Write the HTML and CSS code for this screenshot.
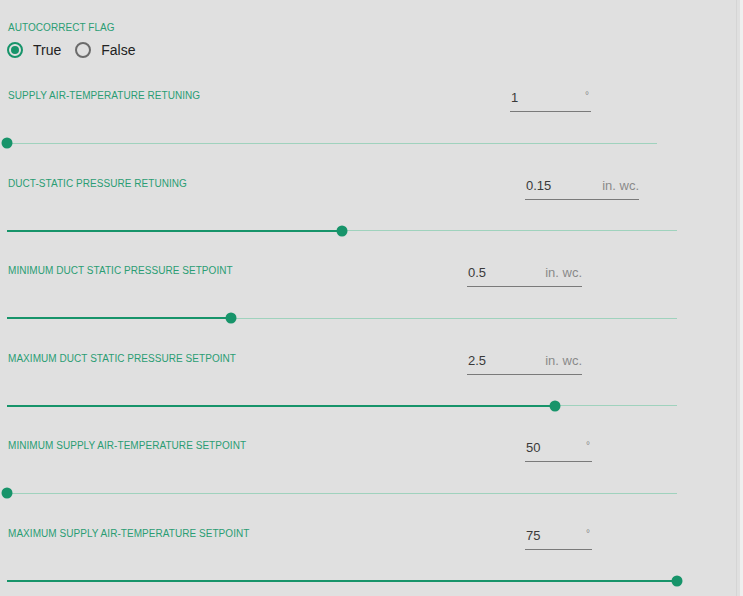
FILE: index.html
```html
<!DOCTYPE html>
<html lang="en">
<head>
<meta charset="utf-8">
<title>Settings</title>
<link rel="stylesheet" href="styles.css">
</head>
<body>
<div class="page">
  <div class="content">
    <div class="flag">
      <div class="label">Autocorrect flag</div>
      <div class="radios">
        <label class="radio checked"><span class="circle"></span><span class="rtext">True</span></label>
        <label class="radio"><span class="circle"></span><span class="rtext">False</span></label>
      </div>
    </div>

    <div class="field f1">
      <div class="head">
        <div class="label">Supply air-temperature retuning</div>
        <div class="input"><span class="value">1</span><span class="unit deg">°</span></div>
      </div>
      <div class="slider short"><div class="track"><div class="fill" style="width:0%"></div><div class="thumb" style="left:0%"></div></div></div>
    </div>

    <div class="field f2">
      <div class="head">
        <div class="label">Duct-static pressure retuning</div>
        <div class="input"><span class="value">0.15</span><span class="unit">in. wc.</span></div>
      </div>
      <div class="slider"><div class="track"><div class="fill" style="width:50%"></div><div class="thumb" style="left:50%"></div></div></div>
    </div>

    <div class="field f3">
      <div class="head">
        <div class="label">Minimum duct static pressure setpoint</div>
        <div class="input"><span class="value">0.5</span><span class="unit">in. wc.</span></div>
      </div>
      <div class="slider"><div class="track"><div class="fill" style="width:33.4%"></div><div class="thumb" style="left:33.4%"></div></div></div>
    </div>

    <div class="field f4">
      <div class="head">
        <div class="label">Maximum duct static pressure setpoint</div>
        <div class="input"><span class="value">2.5</span><span class="unit">in. wc.</span></div>
      </div>
      <div class="slider"><div class="track"><div class="fill" style="width:81.8%"></div><div class="thumb" style="left:81.8%"></div></div></div>
    </div>

    <div class="field f5">
      <div class="head">
        <div class="label">Minimum supply air-temperature setpoint</div>
        <div class="input"><span class="value">50</span><span class="unit deg">°</span></div>
      </div>
      <div class="slider"><div class="track"><div class="fill" style="width:0%"></div><div class="thumb" style="left:0%"></div></div></div>
    </div>

    <div class="field f6">
      <div class="head">
        <div class="label">Maximum supply air-temperature setpoint</div>
        <div class="input"><span class="value">75</span><span class="unit deg">°</span></div>
      </div>
      <div class="slider"><div class="track"><div class="fill" style="width:100%"></div><div class="thumb" style="left:100%"></div></div></div>
    </div>
  </div>
</div>
</body>
</html>
```

FILE: styles.css
```css
html {
  background: #efefef;
}
body {
  margin: 0;
  font-family: "Liberation Sans", Arial, sans-serif;
  color: #222;
}
.page {
  width: 740px;
  background: #e0e0e0;
  min-height: 596px;
}
.content {
  width: 728px;
  padding-left: 8px;
  min-height: 596px;
  border-right: 1px solid #d5d5d5;
  box-sizing: content-box;
}
.label {
  font-size: 10px;
  line-height: 12px;
  letter-spacing: 0.05px;
  text-transform: uppercase;
  color: #2a9d73;
  white-space: nowrap;
}
.flag {
  padding-top: 22px;
}
.radios {
  display: flex;
  margin-top: 8px;
  margin-left: -1px;
  height: 16px;
  align-items: center;
}
.radio {
  display: flex;
  align-items: center;
  margin-right: 14px;
}
.circle {
  width: 16px;
  height: 16px;
  box-sizing: border-box;
  border: 2px solid #6b6b6b;
  border-radius: 50%;
  position: relative;
}
.radio.checked .circle {
  border-color: #17946a;
}
.radio.checked .circle::after {
  content: "";
  position: absolute;
  left: 2px;
  top: 2px;
  width: 8px;
  height: 8px;
  border-radius: 50%;
  background: #17946a;
}
.rtext {
  font-size: 14px;
  line-height: 16px;
  margin-left: 10px;
  color: #222;
}
.field {
  height: 87.5px;
}
.flag + .field {
  margin-top: 31px;
}
.head {
  display: flex;
  align-items: flex-start;
  height: 23px;
}
.head .label {
  width: var(--label-w);
  flex: 0 0 auto;
  margin-top: 1px;
}
.input {
  display: flex;
  justify-content: space-between;
  align-items: flex-start;
  width: var(--input-w);
  height: 23px;
  box-sizing: border-box;
  border-bottom: 1px solid #7a7a7a;
}
.value {
  font-size: 13px;
  line-height: 18px;
  color: #3a3a3a;
  padding-left: 1px;
}
.unit {
  font-size: 13px;
  line-height: 18px;
  color: #8a8a8a;
}
.unit.deg {
  font-size: 10px;
  line-height: 14px;
  padding-right: 2px;
}
.f1 { --label-w: 502px; --input-w: 81px; }
.f2 { --label-w: 517px; --input-w: 114px; }
.f3 { --label-w: 459px; --input-w: 115px; }
.f4 { --label-w: 459px; --input-w: 115px; }
.f5 { --label-w: 517px; --input-w: 67px; }
.f6 { --label-w: 517px; --input-w: 67px; }

.slider {
  margin-top: 25px;
  margin-left: -1px;
  width: 670px;
  height: 12px;
  display: flex;
  align-items: center;
}
.slider.short {
  width: 650px;
}
.track {
  position: relative;
  width: 100%;
  height: 1px;
  background: #9fd2bd;
}
.fill {
  position: absolute;
  left: 0;
  top: -0.5px;
  height: 2px;
  background: #17946a;
}
.thumb {
  position: absolute;
  top: 0.5px;
  width: 11px;
  height: 11px;
  border-radius: 50%;
  background: #17946a;
  transform: translate(-50%, -50%);
}
```
